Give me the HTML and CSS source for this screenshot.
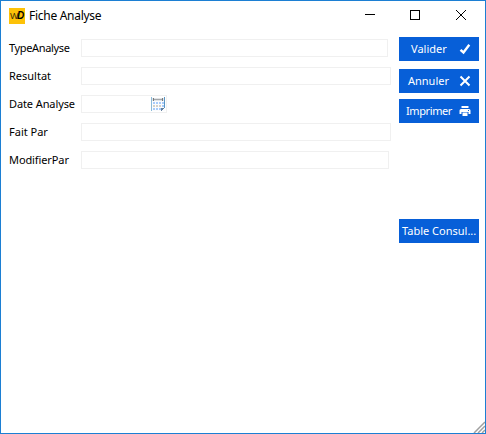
FILE: index.html
```html
<!DOCTYPE html>
<html lang="fr">
<head>
<meta charset="utf-8">
<title>Fiche Analyse</title>
<link rel="stylesheet" href="styles.css">
</head>
<body>
<div class="window">
  <header class="titlebar">
    <span class="logo"><span class="logo-w">W</span><span class="logo-d">D</span></span>
    <h1 class="title">Fiche Analyse</h1>
    <svg class="controls" width="103" height="12" viewBox="0 0 103 12" fill="none" stroke="#000" shape-rendering="crispEdges">
      <path d="M0 5.5h10"/>
      <rect x="45.5" y="1.5" width="9" height="9"/>
      <path d="M91 1l10 10M101 1l-10 10" shape-rendering="auto"/>
    </svg>
  </header>
  <main class="content">
    <form class="fields">
      <div class="row"><label class="label l-type">TypeAnalyse</label><span class="field w-type"></span></div>
      <div class="row"><label class="label">Resultat</label><span class="field w-full"></span></div>
      <div class="row"><label class="label l-date">Date Analyse</label><span class="field w-date">
        <svg width="14" height="15" viewBox="0 0 14 15" shape-rendering="crispEdges">
          <path fill="#fbfcfe" d="M0 2h14v12H0z"/>
          <path fill="#8dbbd8" d="M0 0h1v14H0z"/>
          <path fill="#5a96c4" d="M13 0h1v11h-1z"/>
          <path fill="#e2e4e6" d="M1 1h12v3H1z"/>
          <path fill="#777b80" d="M2 1h1v3H2zM11 1h1v3h-1z"/>
          <path fill="#a5a8ab" d="M3 2h8v1H3z"/>
          <path fill="#a9ccfa" d="M2 5h2v2H2zM5 5h2v2H5zM8 5h2v2H8zM11 5h2v2h-2zM11 8h2v2h-2zM2 11h2v2H2zM5 11h2v2H5zM8 11h2v2H8z"/>
          <path fill="#d3d1ca" d="M2 8h2v2H2zM5 8h2v2H5zM8 8h2v2H8z"/>
          <path fill="#64809f" d="M10 11h3v1h-1v1h-1v1h-1z"/>
        </svg>
      </span></div>
      <div class="row"><label class="label">Fait Par</label><span class="field w-full"></span></div>
      <div class="row"><label class="label l-modif">ModifierPar</label><span class="field w-modif"></span></div>
    </form>
    <div class="actions">
      <button class="btn valider"><span class="text">Valider</span>
        <svg width="12" height="12" viewBox="0 0 12 12"><path d="M1.5 6.800l3 2.700L10.300 1.800" fill="none" stroke="#fff" stroke-width="2.400"/></svg>
      </button>
      <button class="btn annuler"><span class="text">Annuler</span>
        <svg width="12" height="12" viewBox="0 0 12 12"><path d="M1.5 1.5l9 9M10.5 1.5l-9 9" fill="none" stroke="#fff" stroke-width="2"/></svg>
      </button>
      <button class="btn imprimer"><span class="text">Imprimer</span>
        <svg width="12" height="12" viewBox="0 0 12 12"><path fill="#fff" d="M2.5 1h7v2h-7zM2 4h8q1.500 0 1.500 1.500V9H9.500V7h-7v2H.5V5.500Q.5 4 2 4zM3.500 7.500h5V11h-5z"/><path fill="#075fd8" d="M9 5h1v1H9z"/></svg>
      </button>
      <button class="btn table"><span class="text">Table Consul...</span></button>
    </div>
  </main>
  <svg class="grip" width="12" height="12" viewBox="0 0 12 12" stroke="#a0a0a0" stroke-width="1.500"><path d="M1 12L12 1M5 12l7-7M9 12l3-3"/></svg>
</div>
</body>
</html>
```
FILE: styles.css
```css
* { box-sizing: border-box; }
body {
  margin: 0;
  font: 11px/18px "Noto Sans", "Open Sans", sans-serif;
  color: #000;
}
.window {
  position: relative;
  width: 486px;
  height: 434px;
  border: 1px solid #1c7fd3;
  background: #fff;
  overflow: hidden;
}
.titlebar {
  display: flex;
  align-items: center;
  height: 28px;
  padding: 0 17px 0 8px;
}
.logo {
  display: flex;
  align-items: center;
  justify-content: center;
  width: 16px;
  height: 16px;
  margin-top: 2px;
  background: #fdc208;
  color: #3c2f05;
  font: 9px/16px "Liberation Sans", sans-serif;
}
.logo-w { width: 7px; }
.logo-d { font-size: 10px; font-weight: bold; font-style: italic; color: #000; }
.title {
  margin: 2px 0 0 4px;
  font-size: 12px;
  font-weight: normal;
  letter-spacing: -0.28px;
}
.controls { margin-left: auto; }
.content { display: flex; padding: 8px 6px 0 8px; }
.fields {
  display: flex;
  flex-direction: column;
  gap: 10px;
  width: 390px;
  padding-top: 2px;
}
.row { display: flex; height: 18px; }
.label { width: 72px; white-space: nowrap; }
.l-type { letter-spacing: -0.35px; }
.l-date, .l-modif { letter-spacing: -0.1px; }
.field { height: 18px; border: 1px solid #f0f0f0; }
.field svg { display: block; margin: 1px 1px 0 auto; }
.w-type { width: 307px; }
.w-full { width: 310px; }
.w-date { width: 86px; }
.w-modif { width: 308px; }
.actions { display: flex; flex-direction: column; width: 80px; }
.btn {
  display: flex;
  align-items: center;
  justify-content: space-between;
  width: 80px;
  height: 24px;
  padding: 0 8px 0 12px;
  border: 0;
  background: #075fd8;
  color: #fff;
  font: inherit;
  white-space: nowrap;
}
.annuler { margin-top: 8px; padding-left: 9px; }
.imprimer { margin-top: 6px; padding-left: 7px; }
.imprimer .text { letter-spacing: -0.4px; }
.table { margin-top: 96px; padding: 0 3px; }
.grip { position: absolute; right: 0; bottom: 0; }
```
